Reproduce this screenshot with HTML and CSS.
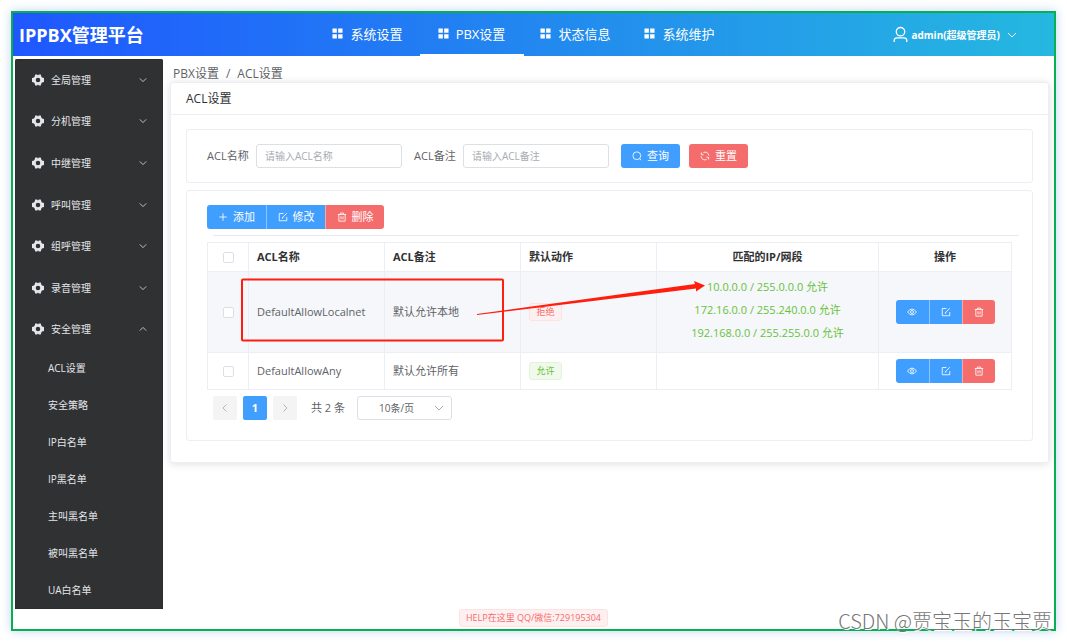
FILE: index.html
```
<!DOCTYPE html>
<html lang="zh-CN">
<head>
<meta charset="utf-8">
<meta name="viewport" content="width=device-width, initial-scale=1">
<title>IPPBX管理平台</title>
<link rel="stylesheet" href="styles.css">
</head>
<body>
<svg class="sprite" aria-hidden="true">
  <symbol id="grid" viewBox="0 0 12 12"><path fill="currentColor" d="M.5.5h4.8v4.8H.5zM6.7.5h4.8v4.8H6.7zM.5 6.7h4.8v4.8H.5zM6.7 6.7h4.8v4.8H6.7z"/></symbol>
  <symbol id="gear" viewBox="0 0 24 24"><path fill="currentColor" fill-rule="evenodd" d="M6.500 1h4l.7 1.600h1.600l.7-1.600h4l1.200 4.200 1.300 2 3.900.6.6 4.200-.6 4.200-3.900.6-1.300 2L17.500 23h-4l-.7-1.600h-1.600l-.7 1.600h-4l-1.200-4.200-1.300-2-3.900-.6L-.5 12l.6-4.200 3.900-.6 1.300-2zM12 7.500a4.500 4.500 0 1 0 0 9 4.500 4.500 0 0 0 0-9z"/></symbol>
  <symbol id="down" viewBox="0 0 10 10"><path class="line" d="M1 3l4 4 4-4"/></symbol>
  <symbol id="up" viewBox="0 0 10 10"><path class="line" d="M1 7l4-4 4 4"/></symbol>
  <symbol id="left" viewBox="0 0 10 10"><path class="line" d="M6.500 1.500L3 5l3.500 3.500"/></symbol>
  <symbol id="right" viewBox="0 0 10 10"><path class="line" d="M3.500 1.500L7 5 3.500 8.500"/></symbol>
  <symbol id="user" viewBox="0 0 16 18"><circle class="line bold" cx="8" cy="6" r="4.500"/><path class="line bold" d="M1.300 17v-1.500q0-3 3-3h7.400q3 0 3 3V17"/></symbol>
  <symbol id="search" viewBox="0 0 12 12"><circle class="line" cx="5.800" cy="5.700" r="4.700"/><path class="line" d="M9 9l2 2"/></symbol>
  <symbol id="refresh" viewBox="0 0 12 12"><path class="line" d="M4 1.900Q6 .8 8.300 1.800q2.300 1.200 2.300 3.700M8 10.100q-2 1.100-4.300.1Q1.400 9 1.400 6.500M1.600 1.800v2.700h2.700M10.400 10.200V7.500H7.700"/></symbol>
  <symbol id="plus" viewBox="0 0 12 12"><path class="line" d="M6 1.500v9M1.500 6h9"/></symbol>
  <symbol id="edit" viewBox="0 0 12 12"><path class="line" d="M6.500 1.800H1.500v8.700h9V6M5 7.200L10.500 1.500M4.700 7.500l1.600-.3"/></symbol>
  <symbol id="trash" viewBox="0 0 12 12"><path class="line" d="M1 3h10M4 3V1.300h4V3M2.200 3v8h7.600V3M4.800 5.200v3.600M7.200 5.200v3.600"/></symbol>
  <symbol id="eye" viewBox="0 0 12 12"><path class="line" d="M.6 6Q3 2.500 6 2.500T11.400 6Q9 9.500 6 9.500T.6 6z"/><circle class="line" cx="6" cy="6" r="1.800"/></symbol>
</svg>

<div class="frame">
  <header class="topbar">
    <h1 class="brand">IPPBX管理平台</h1>
    <nav class="topnav">
      <a href="#"><svg class="icon"><use href="#grid"/></svg>系统设置</a>
      <a href="#" class="current"><svg class="icon"><use href="#grid"/></svg>PBX设置</a>
      <a href="#"><svg class="icon"><use href="#grid"/></svg>状态信息</a>
      <a href="#"><svg class="icon"><use href="#grid"/></svg>系统维护</a>
    </nav>
    <button class="account" type="button"><svg class="avatar"><use href="#user"/></svg><span>admin(超级管理员)</span><svg class="caret"><use href="#down"/></svg></button>
  </header>

  <div class="body">
    <aside class="sidebar">
      <button class="group" type="button"><svg class="gear"><use href="#gear"/></svg><span>全局管理</span><svg class="caret"><use href="#down"/></svg></button>
      <button class="group" type="button"><svg class="gear"><use href="#gear"/></svg><span>分机管理</span><svg class="caret"><use href="#down"/></svg></button>
      <button class="group" type="button"><svg class="gear"><use href="#gear"/></svg><span>中继管理</span><svg class="caret"><use href="#down"/></svg></button>
      <button class="group" type="button"><svg class="gear"><use href="#gear"/></svg><span>呼叫管理</span><svg class="caret"><use href="#down"/></svg></button>
      <button class="group" type="button"><svg class="gear"><use href="#gear"/></svg><span>组呼管理</span><svg class="caret"><use href="#down"/></svg></button>
      <button class="group" type="button"><svg class="gear"><use href="#gear"/></svg><span>录音管理</span><svg class="caret"><use href="#down"/></svg></button>
      <button class="group" type="button" aria-expanded="true"><svg class="gear"><use href="#gear"/></svg><span>安全管理</span><svg class="caret"><use href="#up"/></svg></button>
      <nav class="submenu">
        <a href="#">ACL设置</a>
        <a href="#">安全策略</a>
        <a href="#">IP白名单</a>
        <a href="#">IP黑名单</a>
        <a href="#">主叫黑名单</a>
        <a href="#">被叫黑名单</a>
        <a href="#">UA白名单</a>
      </nav>
    </aside>

    <main class="main">
      <nav class="crumbs"><a href="#">PBX设置</a><span>/</span><a href="#">ACL设置</a></nav>
      <section class="card">
        <h2 class="card-title">ACL设置</h2>
        <div class="card-body">
          <form class="panel search">
            <label for="acl-name">ACL名称</label>
            <input id="acl-name" type="text" placeholder="请输入ACL名称">
            <label for="acl-note">ACL备注</label>
            <input id="acl-note" type="text" placeholder="请输入ACL备注">
            <button class="btn primary" type="button"><svg class="icon"><use href="#search"/></svg>查询</button>
            <button class="btn danger" type="button"><svg class="icon"><use href="#refresh"/></svg>重置</button>
          </form>

          <div class="panel list">
            <div class="btn-group">
              <button class="btn primary" type="button"><svg class="icon"><use href="#plus"/></svg>添加</button>
              <button class="btn primary" type="button"><svg class="icon"><use href="#edit"/></svg>修改</button>
              <button class="btn danger" type="button"><svg class="icon"><use href="#trash"/></svg>删除</button>
            </div>
            <hr class="rule">
            <div class="table-wrap">
              <table>
                <colgroup><col class="c-check"><col class="c-text"><col class="c-text"><col class="c-text"><col><col class="c-ops"></colgroup>
                <thead>
                  <tr><th class="mid"><input type="checkbox" aria-label="全选"></th><th>ACL名称</th><th>ACL备注</th><th>默认动作</th><th class="mid">匹配的IP/网段</th><th class="mid">操作</th></tr>
                </thead>
                <tbody>
                  <tr class="hover">
                    <td class="mid"><input type="checkbox" aria-label="DefaultAllowLocalnet"></td>
                    <td>DefaultAllowLocalnet</td>
                    <td>默认允许本地</td>
                    <td><span class="tag deny">拒绝</span></td>
                    <td class="mid ips"><div>10.0.0.0 / 255.0.0.0 允许</div><div>172.16.0.0 / 255.240.0.0 允许</div><div>192.168.0.0 / 255.255.0.0 允许</div></td>
                    <td class="mid"><div class="btn-group ops"><button class="btn primary" type="button" aria-label="查看"><svg class="icon"><use href="#eye"/></svg></button><button class="btn primary" type="button" aria-label="修改"><svg class="icon"><use href="#edit"/></svg></button><button class="btn danger" type="button" aria-label="删除"><svg class="icon"><use href="#trash"/></svg></button></div></td>
                  </tr>
                  <tr class="short">
                    <td class="mid"><input type="checkbox" aria-label="DefaultAllowAny"></td>
                    <td>DefaultAllowAny</td>
                    <td>默认允许所有</td>
                    <td><span class="tag allow">允许</span></td>
                    <td></td>
                    <td class="mid"><div class="btn-group ops"><button class="btn primary" type="button" aria-label="查看"><svg class="icon"><use href="#eye"/></svg></button><button class="btn primary" type="button" aria-label="修改"><svg class="icon"><use href="#edit"/></svg></button><button class="btn danger" type="button" aria-label="删除"><svg class="icon"><use href="#trash"/></svg></button></div></td>
                  </tr>
                </tbody>
              </table>
              <svg class="callout" viewBox="0 0 466 66" aria-hidden="true"><rect x="1" y="1.500" width="261" height="61" rx="1" fill="none" stroke="#ff1d0d" stroke-width="2"/></svg>
              <svg class="arrow" viewBox="0 -4 228 40" aria-hidden="true"><path fill="#ff1d0d" d="M0 32L218 2l-1-3 11 4.500L219 9.500v-3L0 33z"/></svg>
            </div>
            <div class="pager">
              <button class="page" type="button" aria-label="上一页" disabled><svg class="caret"><use href="#left"/></svg></button>
              <button class="page active" type="button">1</button>
              <button class="page" type="button" aria-label="下一页" disabled><svg class="caret"><use href="#right"/></svg></button>
              <span class="total">共 2 条</span>
              <div class="size"><select aria-label="每页条数"><option>10条/页</option></select><svg class="caret"><use href="#down"/></svg></div>
            </div>
          </div>
        </div>
      </section>
    </main>
  </div>

  <footer class="footer"><span class="help">HELP在这里 QQ/微信:729195304</span></footer>
  <div class="watermark">CSDN @贾宝玉的玉宝贾</div>
</div>
</body>
</html>
```

FILE: styles.css
```
* { box-sizing: border-box; }

body {
  margin: 0;
  padding: 11px;
  background: #fff;
  color: #606266;
  font: 11px/16px "Open Sans", "Noto Sans CJK SC", sans-serif;
}

button, input, select { font: inherit; color: inherit; margin: 0; }
button { border: 0; padding: 0; background: none; cursor: pointer; }
a { color: inherit; text-decoration: none; }
svg { display: block; flex: none; }
.sprite { position: absolute; width: 0; height: 0; }
.line { fill: none; stroke: currentColor; stroke-width: 1; }
.line.bold { stroke-width: 1.4; }
.caret { width: 10px; height: 10px; }
.icon { width: 10px; height: 10px; }

.frame {
  position: relative;
  display: flex;
  flex-direction: column;
  min-height: calc(100vh - 22px);
  border: 2px solid #06b050;
  box-shadow: 0 0 10px #c3d3f0;
}

.topbar {
  display: grid;
  grid-template-columns: 1fr auto 1fr;
  align-items: center;
  height: 43px;
  padding: 0 37px 0 6px;
  background: linear-gradient(90deg, #1f57ff, #25b8e0);
  color: #fff;
}
.brand { margin: 0; font-size: 18px; line-height: 24px; font-weight: 700; }
.topnav { display: flex; height: 43px; padding-left: 11px; font-size: 13px; }
.topnav a {
  display: flex;
  align-items: center;
  justify-content: center;
  gap: 7px;
  min-width: 104px;
  border-bottom: 2px solid transparent;
}
.topnav .icon { width: 11px; height: 11px; }
.topnav .current { border-color: #fff; }
.account {
  display: flex;
  align-items: center;
  justify-self: end;
  gap: 3px;
  color: #fff;
  font-size: 10px;
  font-weight: 700;
}
.account .avatar { width: 15px; height: 17px; }
.account .caret { margin-left: 4px; }

.body { display: flex; flex: 1; padding: 3px 5px 0 2px; }

.sidebar {
  display: flex;
  flex-direction: column;
  flex: none;
  width: 148px;
  border-radius: 2px 2px 0 0;
  background: #303133;
  color: #e4e6ea;
  box-shadow: inset 0 0 1px #000;
  font-size: 10px;
}
.group {
  display: grid;
  grid-template-columns: 12px 1fr 10px;
  gap: 7px;
  align-items: center;
  flex: 1 1 41px;
  padding: 0 14px 0 17px;
  text-align: left;
}
.gear { width: 12px; height: 12px; }
.group .caret { width: 8px; height: 8px; }
.submenu { display: flex; flex-direction: column; flex: none; }
.submenu a { padding: 0 33px; line-height: 37px; }

.main { flex: 1; min-width: 0; padding: 7px 0 0 7px; }
.crumbs { display: flex; gap: 7px; padding: 0 3px; font-size: 12px; }
.card {
  border: 1px solid #ebeef5;
  border-radius: 3px;
  background: #fff;
  box-shadow: 0 1px 8px rgba(0, 0, 0, .13);
}
.card-title {
  margin: 0;
  padding: 8px 15px 7px;
  border-bottom: 1px solid #ebeef5;
  color: #303133;
  font-size: 12px;
  line-height: 16px;
  font-weight: 400;
}
.card-body { display: grid; gap: 7px; padding: 14px 15px 21px; }
.panel { border: 1px solid #ebeef5; border-radius: 3px; padding: 14px 20px 20px; }

.search { display: flex; align-items: center; height: 54px; padding: 0 20px; }
.search label { width: 49px; flex: none; }
.search input {
  width: 146px;
  height: 24px;
  margin-right: 12px;
  padding: 0 8px;
  border: 1px solid #dcdfe6;
  border-radius: 3px;
  background: #fff;
  font-size: 10px;
}
.search input::placeholder { color: #a8abb2; opacity: 1; }
.search .btn { margin-right: 9px; }
.btn {
  display: flex;
  align-items: center;
  justify-content: center;
  gap: 5px;
  width: 59px;
  height: 24px;
  border-radius: 3px;
  color: #fff;
  font-size: 11px;
}
.primary { background: #409eff; }
.danger { background: #f56c6c; }
.btn-group { display: flex; }
.btn-group .btn { border-radius: 0; }
.btn-group .btn + .btn { border-left: 1px solid #8cc5ff; }
.btn-group .btn:first-child { border-radius: 3px 0 0 3px; }
.btn-group .btn:last-child { border-radius: 0 3px 3px 0; }
.btn-group .btn + .danger { border-left-color: #f9a7a7; }

.rule { margin: 6px -7px 6px 6px; border: 0; border-top: 1px solid #e6e8ed; }
.table-wrap { position: relative; }
table {
  width: 100%;
  table-layout: fixed;
  border-collapse: collapse;
}
.c-check { width: 41px; }
.c-text { width: 136px; }
.c-ops { width: 133px; }
th, td { padding: 0 8px; border: 1px solid #ebeef5; text-align: left; }
th { height: 29px; color: #303133; }
td { height: 81px; }
.short td { height: 37px; }
.mid { text-align: center; }
.hover { background: #f5f7fa; }
td.ips { padding-bottom: 6px; color: #67c23a; line-height: 23px; }
input[type="checkbox"] {
  appearance: none;
  display: block;
  width: 11px;
  height: 11px;
  margin: 0 auto;
  border: 1px solid #dcdfe6;
  border-radius: 2px;
  background: #fff;
}
.tag {
  display: block;
  width: 33px;
  border: 1px solid;
  border-radius: 3px;
  font-size: 9px;
  text-align: center;
}
.deny { border-color: #fde2e2; background: #fef0f0; color: #f56c6c; }
.allow { border-color: #e1f3d8; background: #f0f9eb; color: #67c23a; }
.ops { justify-content: center; }
.ops .btn { width: 33px; }

.callout { position: absolute; left: 34px; top: 36px; width: 466px; height: 66px; }
.arrow { position: absolute; left: 270px; top: 36px; width: 228px; height: 40px; }

.pager { display: flex; align-items: center; gap: 6px; padding: 6px 6px 0; }
.page {
  display: grid;
  place-items: center;
  width: 24px;
  height: 24px;
  border-radius: 2px;
  background: #f4f4f5;
  color: #b4b7be;
}
.page.active { background: #409eff; color: #fff; font-weight: 700; }
.total { margin: 0 6px 0 8px; }
.size { position: relative; }
.size select {
  appearance: none;
  display: block;
  width: 95px;
  height: 24px;
  padding: 0 21px;
  border: 1px solid #dcdfe6;
  border-radius: 3px;
  background: #fff;
  font-size: 10px;
}
.size .caret { position: absolute; right: 8px; top: 7px; color: #a8abb2; pointer-events: none; }

.footer { display: flex; justify-content: center; padding-bottom: 2px; }
.help {
  padding: 0 6px;
  border: 1px solid #fde2e2;
  border-radius: 3px;
  background: #fef0f0;
  color: #f56c6c;
  font-size: 9px;
}
.watermark {
  position: absolute;
  right: 2px;
  bottom: -6px;
  color: #777;
  font: 300 20px/28px "Noto Sans CJK SC", sans-serif;
  text-shadow: 1px 1px 0 #fff;
  white-space: nowrap;
}
```
